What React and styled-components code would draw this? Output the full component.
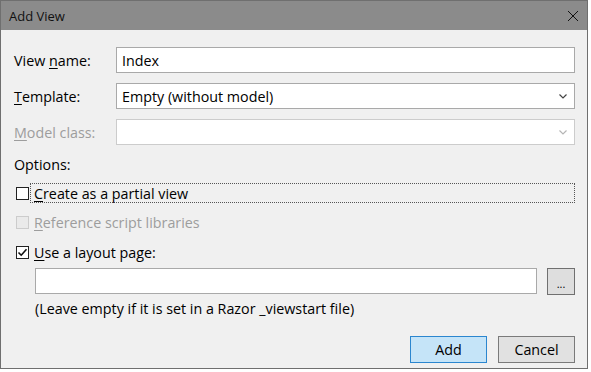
import styled, { createGlobalStyle } from 'styled-components'

const GlobalStyle = createGlobalStyle`
  body {
    margin: 0;
    background: #ffffff;
    font-family: 'Segoe UI', 'Open Sans', sans-serif;
  }
`

const Window = styled.div`
  width: 588px;
  height: 369px;
  box-sizing: border-box;
  border: 1px solid #6f6f6f;
  background: #f0f0f0;
  display: flex;
  flex-direction: column;
`

const TitleBar = styled.div`
  height: 29px;
  flex: none;
  background: #8b8b8b;
  display: flex;
  align-items: center;
  justify-content: space-between;
  padding: 0 8px 0 8px;
  font-size: 13px;
  color: #111;
`

const CloseIcon = () => (
  <svg width="12" height="12" viewBox="0 0 12 12">
    <path d="M1 1 L11 11 M11 1 L1 11" stroke="#111" strokeWidth="1" fill="none" />
  </svg>
)

const Body = styled.div`
  flex: 1;
  padding: 17px 12px 0 13px;
  display: flex;
  flex-direction: column;
  font-size: 14.3px;
  color: #000;
`

const FieldRow = styled.div`
  display: flex;
  align-items: center;
  height: 26px;
  margin-bottom: 10px;
`

const Label = styled.label`
  width: 102px;
  flex: none;
  color: ${({ disabled }) => (disabled ? '#9d9d9d' : '#000')};
  u {
    text-decoration: underline;
    text-underline-offset: 2px;
  }
`

const Input = styled.div`
  flex: 1;
  height: 26px;
  box-sizing: border-box;
  background: #fff;
  border: 1px solid ${({ disabled }) => (disabled ? '#cccccc' : '#a9a9a9')};
  display: flex;
  align-items: center;
  justify-content: space-between;
  padding: 0 7px 0 5px;
`

const Chevron = ({ disabled }) => (
  <svg width="8" height="5" viewBox="0 0 8 5">
    <path d="M0.5 0.5 L4 4 L7.5 0.5" stroke={disabled ? '#b5b5b5' : '#444'} strokeWidth="1.2" fill="none" />
  </svg>
)

const SectionTitle = styled.div`
  height: 18px;
  display: flex;
  align-items: center;
`

const CheckRow = styled.div`
  display: flex;
  align-items: center;
  height: 20px;
  margin-top: ${({ first }) => (first ? '10px' : '9.5px')};
  color: ${({ disabled }) => (disabled ? '#9d9d9d' : '#000')};
`

const Box = styled.span`
  width: 13px;
  height: 13px;
  box-sizing: border-box;
  flex: none;
  margin-left: 2px;
  border: 1px solid ${({ disabled }) => (disabled ? '#cccccc' : '#222')};
  background: ${({ disabled }) => (disabled ? '#eaeaea' : '#fff')};
  display: flex;
  align-items: center;
  justify-content: center;
`

const CheckText = styled.span`
  margin-left: 1px;
  padding: 0 4px 0 3px;
  height: 20px;
  display: flex;
  align-items: center;
  flex: ${({ focused }) => (focused ? 1 : 'none')};
  border: 1px dotted ${({ focused }) => (focused ? '#555' : 'transparent')};
  box-sizing: border-box;
  u {
    text-underline-offset: 2px;
  }
`

const Tick = () => (
  <svg width="11" height="11" viewBox="0 0 11 11">
    <path d="M1.5 5.5 L4.2 8.2 L9.5 2.2" stroke="#111" strokeWidth="1.6" fill="none" />
  </svg>
)

const PathRow = styled.div`
  display: flex;
  align-items: center;
  gap: 10px;
  margin: 5.5px 0 0 21px;
`

const PathInput = styled(Input)`
  flex: 1;
`

const BrowseButton = styled.button`
  width: 28px;
  height: 27px;
  box-sizing: border-box;
  border: 1px solid #707070;
  background: #dedede;
  font: inherit;
  font-size: 11px;
  padding: 4px 0 0;
  line-height: 1;
`

const Hint = styled.div`
  margin: 4px 0 0 21px;
  height: 20px;
  display: flex;
  align-items: center;
`

const Footer = styled.div`
  display: flex;
  justify-content: flex-end;
  gap: 11px;
  margin-top: 17px;
`

const Button = styled.button`
  width: 77px;
  height: 27px;
  box-sizing: border-box;
  font: inherit;
  font-size: 14.3px;
  color: #000;
  border: 1px solid ${({ primary }) => (primary ? '#2b86cf' : '#7a7a7a')};
  background: ${({ primary }) => (primary ? '#c5e4f8' : '#e1e1e1')};
  padding: 0;
`

export default function App() {
  return (
    <>
      <GlobalStyle />
      <Window>
        <TitleBar>
          <span>Add View</span>
          <CloseIcon />
        </TitleBar>
        <Body>
          <FieldRow>
            <Label>View <u>n</u>ame:</Label>
            <Input>Index</Input>
          </FieldRow>
          <FieldRow>
            <Label><u>T</u>emplate:</Label>
            <Input>
              Empty (without model)
              <Chevron />
            </Input>
          </FieldRow>
          <FieldRow>
            <Label disabled><u>M</u>odel class:</Label>
            <Input disabled>
              <span />
              <Chevron disabled />
            </Input>
          </FieldRow>
          <SectionTitle>Options:</SectionTitle>
          <CheckRow first>
            <Box />
            <CheckText focused><span><u>C</u>reate as a partial view</span></CheckText>
          </CheckRow>
          <CheckRow disabled>
            <Box disabled />
            <CheckText><span><u>R</u>eference script libraries</span></CheckText>
          </CheckRow>
          <CheckRow>
            <Box><Tick /></Box>
            <CheckText><span><u>U</u>se a layout page:</span></CheckText>
          </CheckRow>
          <PathRow>
            <PathInput />
            <BrowseButton>...</BrowseButton>
          </PathRow>
          <Hint>(Leave empty if it is set in a Razor _viewstart file)</Hint>
          <Footer>
            <Button primary>Add</Button>
            <Button>Cancel</Button>
          </Footer>
        </Body>
      </Window>
    </>
  )
}
